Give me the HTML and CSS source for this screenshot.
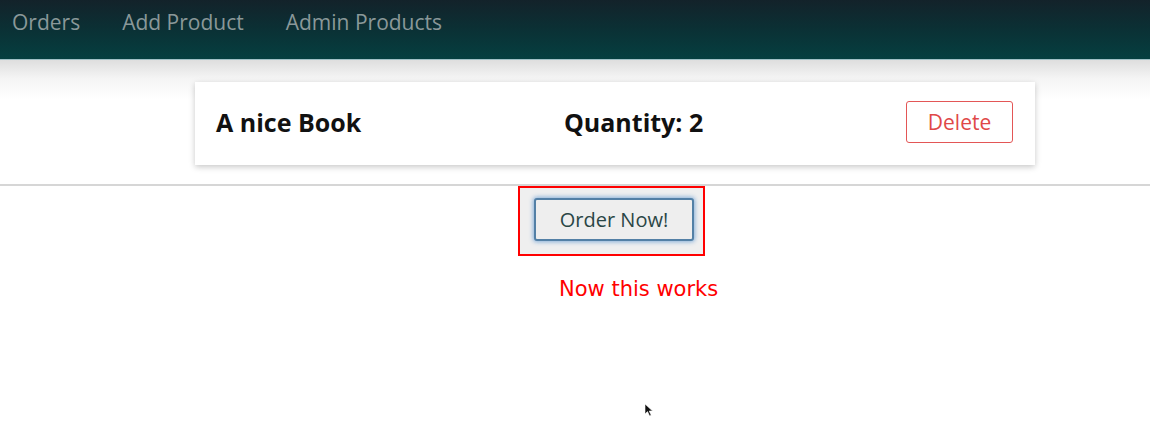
FILE: index.html
```html
<!DOCTYPE html>
<html>
<head>
<meta charset="utf-8">
<link rel="stylesheet" href="styles.css">
</head>
<body>
<header class="topbar">
  <nav class="nav">
    <a class="nav-link">Orders</a>
    <a class="nav-link">Add Product</a>
    <a class="nav-link">Admin Products</a>
  </nav>
</header>
<main class="content">
  <section class="cart">
    <div class="cart-item">
      <h2 class="item-title">A nice Book</h2>
      <h2 class="item-qty">Quantity: 2</h2>
      <button class="btn-delete">Delete</button>
    </div>
  </section>
  <div class="order-area">
    <div class="highlight">
      <button class="btn-order">Order Now!</button>
    </div>
    <p class="note">Now this works</p>
  </div>
  <svg class="cursor" width="10" height="14" viewBox="0 0 10 14"><path d="M1 1 L1 11 L3.5 8.6 L5.6 13 L7.2 12.2 L5.2 8 L8.6 8 Z" fill="#111" stroke="#fff" stroke-width="0.6"/></svg>
</main>
</body>
</html>
```
FILE: styles.css
```css
* { box-sizing: border-box; }
html, body { margin: 0; padding: 0; }
body {
  width: 1150px;
  height: 421px;
  overflow: hidden;
  background: #fff;
  font-family: "Open Sans", "Noto Sans", sans-serif;
}
.topbar {
  height: 60px;
  background: linear-gradient(180deg, #13222a 0%, #0a3236 55%, #053f40 100%);
  border-bottom: 1px solid #9fc0c6;
  display: flex;
  align-items: flex-start;
}
.nav {
  display: flex;
  gap: 42px;
  padding: 8px 0 0 12px;
}
.nav-link {
  color: #8a9899;
  font-size: 21px;
  line-height: 28px;
}
.content {
  position: relative;
  height: 361px;
  background: linear-gradient(180deg, #dedede 0px, #f4f4f4 18px, #ffffff 40px, #ffffff 100%);
}
.cart {
  height: 126px;
  padding-top: 22px;
  border-bottom: 2px solid #d6d6d6;
}
.cart-item {
  margin-left: 195px;
  width: 840px;
  height: 83px;
  background: #fff;
  box-shadow: 0 2px 6px rgba(0,0,0,0.22);
  display: flex;
  align-items: center;
  justify-content: space-between;
  padding: 0 22px 4px 21px;
}
.item-title, .item-qty {
  margin: 0;
  font-size: 25px;
  font-weight: 700;
  color: #111;
  line-height: 32px;
}
.btn-delete {
  width: 107px;
  height: 42px;
  background: #fff;
  border: 1px solid #e35656;
  border-radius: 3px;
  color: #e04848;
  font-family: "Open Sans", sans-serif;
  font-size: 21px;
  padding: 0;
}
.order-area {
  display: flex;
  flex-direction: column;
}
.highlight {
  margin-left: 518px;
  width: 187px;
  height: 70px;
  border: 2px solid #ff0000;
  background: #efefef;
  padding: 10px 0 0 14px;
}
.btn-order {
  width: 160px;
  height: 43px;
  background: #eeeeee;
  border: 2px solid #5380a6;
  border-radius: 3px;
  box-shadow: 0 0 4px 1px rgba(90,150,210,0.7);
  color: #2a4646;
  font-family: "Open Sans", sans-serif;
  font-size: 20px;
  padding: 0;
}
.note {
  margin: 20px 0 0 559px;
  color: #ff0000;
  font-family: "DejaVu Sans", sans-serif;
  font-size: 21px;
  line-height: 26px;
}
.cursor {
  position: absolute;
  left: 644px;
  top: 343px;
}
```
